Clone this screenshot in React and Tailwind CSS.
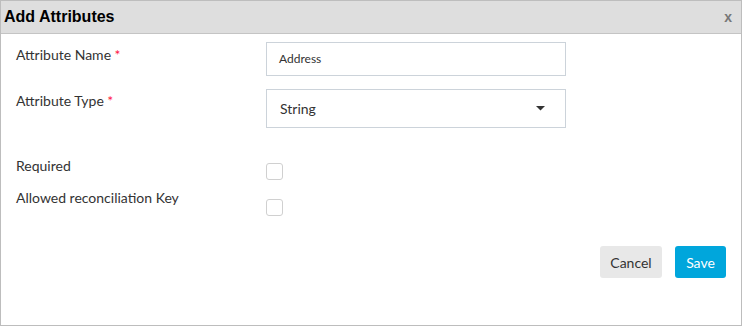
export default function App() {
  const font = { fontFamily: "Lato, 'Open Sans', sans-serif" };
  return (
    <div className="w-[742px] h-[326px] bg-white border border-[#bdbdbd] flex flex-col text-[#333]" style={font}>
      <div className="h-[33px] shrink-0 bg-[#dedede] border-b border-[#c4c4c4] flex items-center justify-between pl-[3px] pr-[9px]">
        <span className="font-bold text-[16px] text-black" style={{ fontFamily: "'Liberation Sans', Arial, sans-serif" }}>Add Attributes</span>
        <span className="font-bold text-[14px] text-[#777]" style={{ fontFamily: "'Liberation Sans', Arial, sans-serif" }}>x</span>
      </div>
      <div className="flex flex-col pl-[15px] pt-[8px] pr-[15px]">
        <div className="flex items-start">
          <div className="w-[250px] pt-[3px] text-[14px] leading-[20px]">Attribute Name <span className="text-[#ff1744]">*</span></div>
          <div className="w-[300px] h-[34px] border border-[#ccd3da] flex items-center px-[12px] text-[12px] text-[#333]">Address</div>
        </div>
        <div className="flex items-start mt-[13px]">
          <div className="w-[250px] pt-[2px] text-[14px] leading-[20px]">Attribute Type <span className="text-[#ff1744]">*</span></div>
          <div className="w-[300px] h-[39px] border border-[#ccd3da] flex items-center justify-between pl-[13px] pr-[20px] text-[14px] text-[#333]">
            <span>String</span>
            <svg width="9" height="5" viewBox="0 0 9 5"><path d="M0 0 L9 0 L4.5 4.5 Z" fill="#333" /></svg>
          </div>
        </div>
        <div className="flex items-start mt-[28px]">
          <div className="w-[250px] text-[14px] leading-[20px]">Required</div>
          <div className="mt-[7px] w-[17px] h-[17px] rounded-[3px] border border-[#d0d0d0] bg-white"></div>
        </div>
        <div className="flex items-start mt-[8px]">
          <div className="w-[250px] text-[14px] leading-[20px]">Allowed reconciliation Key</div>
          <div className="mt-[11px] w-[17px] h-[17px] rounded-[3px] border border-[#d0d0d0] bg-white"></div>
        </div>
        <div className="flex justify-end gap-[13px] mt-[30px]">
          <button className="w-[62px] h-[32px] rounded-[3px] bg-[#e8e8e8] text-[14px] text-[#333]">Cancel</button>
          <button className="w-[51px] h-[32px] rounded-[3px] bg-[#00a6dc] text-[14px] text-white">Save</button>
        </div>
      </div>
    </div>
  );
}
